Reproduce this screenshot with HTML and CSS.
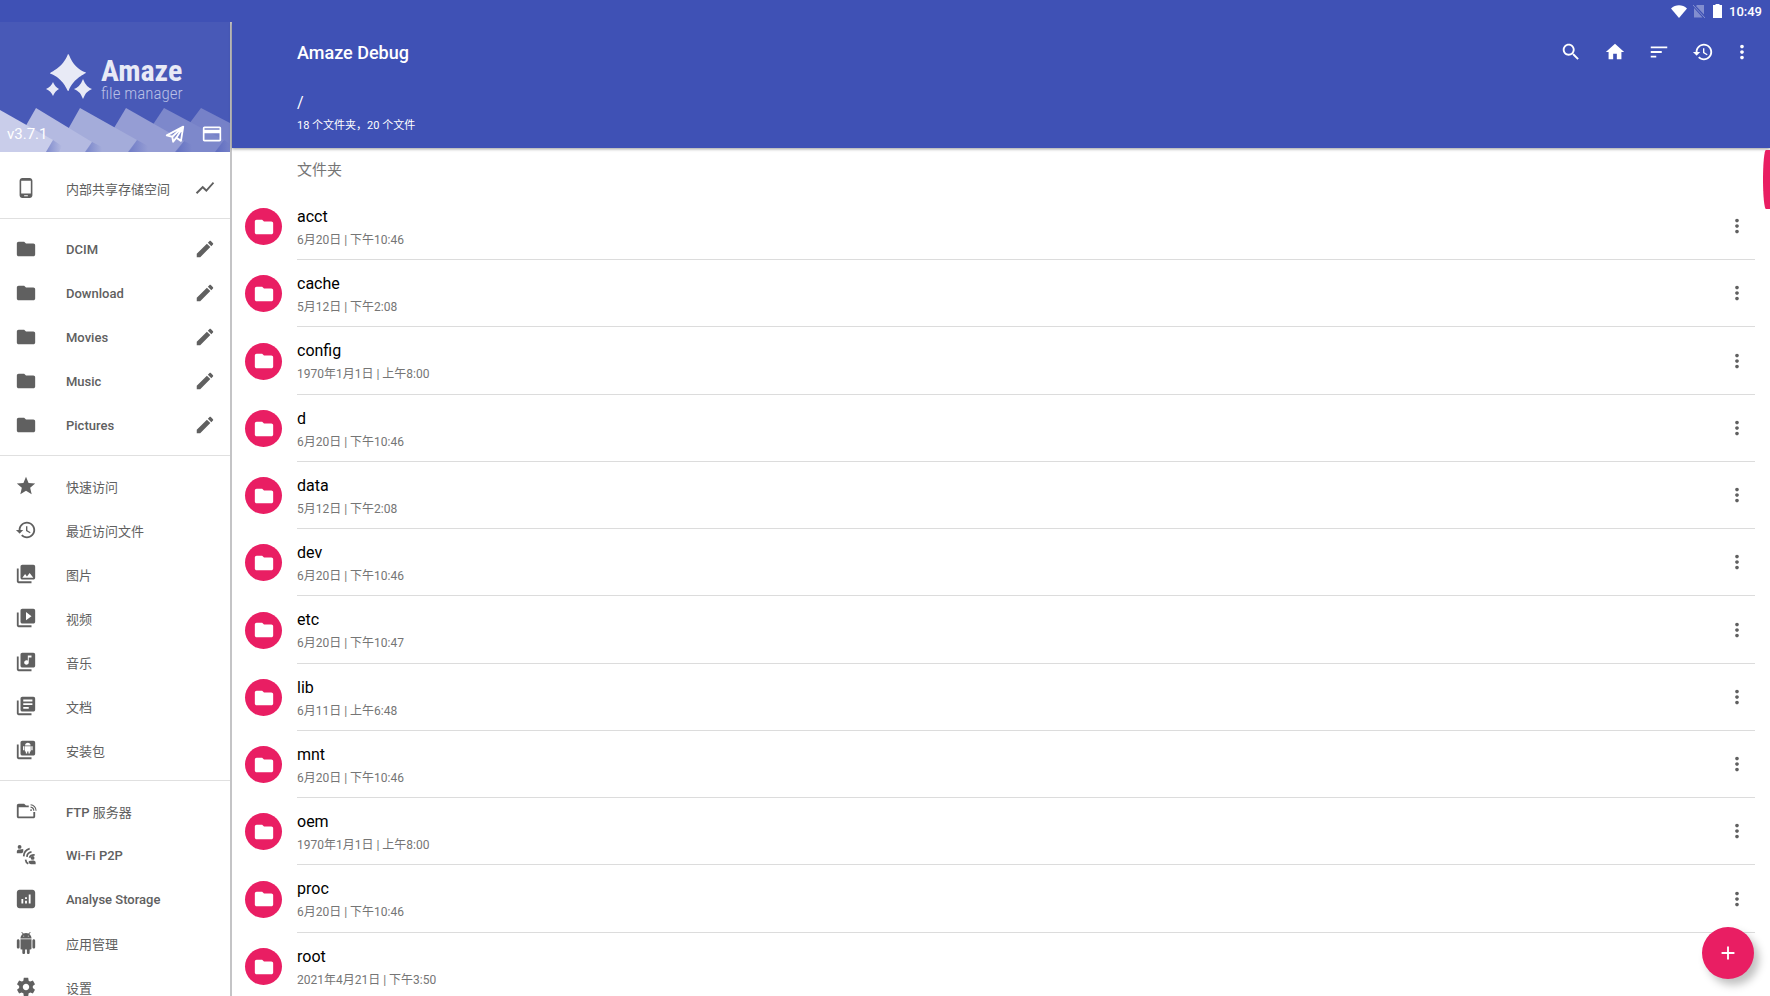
FILE: index.html
```html
<!DOCTYPE html>
<html lang="zh-CN">
<head>
  <meta charset="UTF-8">
  <meta name="viewport" content="width=device-width, initial-scale=1.0">
  <title>Amaze Debug</title>
  <link rel="stylesheet" href="styles.css">
</head>
<body>
  <!-- Icon shapes shared by the drawer, toolbar and file list -->
  <svg class="sprite" aria-hidden="true">
    <symbol id="folder" viewBox="0 0 24 24"><path d="M10 4H4c-1.100 0-2 .9-2 2v12c0 1.100.9 2 2 2h16c1.100 0 2-.9 2-2V8c0-1.100-.9-2-2-2h-8l-2-2z"/></symbol>
    <symbol id="pencil" viewBox="0 0 24 24"><path d="M3 17.250V21h3.750L17.810 9.940l-3.750-3.750L3 17.250zM20.710 7.040c.39-.39.39-1.020 0-1.410l-2.340-2.340c-.39-.39-1.020-.39-1.410 0l-1.830 1.830 3.750 3.750 1.830-1.830z"/></symbol>
    <symbol id="phone" viewBox="0 0 24 24"><path d="M16 1H8C6.340 1 5 2.340 5 4v16c0 1.660 1.340 3 3 3h8c1.660 0 3-1.340 3-3V4c0-1.660-1.340-3-3-3zm-2 20h-4v-1h4v1zm3.250-3H6.750V4h10.500v14z"/></symbol>
    <symbol id="chart-line" viewBox="0 0 24 24"><path d="M3.500 18.490l6-6.010 4 4L22 6.920l-1.410-1.410-7.090 7.970-4-4L2 16.990z"/></symbol>
    <symbol id="star" viewBox="0 0 24 24"><path d="M12 17.270L18.180 21l-1.640-7.030L22 9.240l-7.190-.61L12 2 9.190 8.630 2 9.240l5.460 4.730L5.820 21z"/></symbol>
    <symbol id="history" viewBox="0 0 24 24"><path d="M13 3c-4.970 0-9 4.030-9 9H1l3.890 3.890.07.14L9 12H6c0-3.870 3.130-7 7-7s7 3.130 7 7-3.130 7-7 7c-1.930 0-3.680-.79-4.940-2.060l-1.420 1.420C8.270 19.990 10.510 21 13 21c4.970 0 9-4.030 9-9s-4.030-9-9-9zm-1 5v5l4.280 2.540.72-1.210-3.500-2.080V8H12z"/></symbol>
    <symbol id="images" viewBox="0 0 24 24"><path d="M22 16V4c0-1.100-.9-2-2-2H8c-1.100 0-2 .9-2 2v12c0 1.100.9 2 2 2h12c1.100 0 2-.9 2-2zm-11-4l2.030 2.710L16 11l4 5H8l3-4zM2 6v14c0 1.100.9 2 2 2h14v-2H4V6H2z"/></symbol>
    <symbol id="videos" viewBox="0 0 24 24"><path d="M4 6H2v14c0 1.100.9 2 2 2h14v-2H4V6zm16-4H8c-1.100 0-2 .9-2 2v12c0 1.100.9 2 2 2h12c1.100 0 2-.9 2-2V4c0-1.100-.9-2-2-2zm-8 12.500v-9l6 4.500-6 4.500z"/></symbol>
    <symbol id="music" viewBox="0 0 24 24"><path d="M20 2H8c-1.100 0-2 .9-2 2v12c0 1.100.9 2 2 2h12c1.100 0 2-.9 2-2V4c0-1.100-.9-2-2-2zm-2 5h-3v5.500c0 1.380-1.120 2.500-2.500 2.500S10 13.880 10 12.500s1.120-2.500 2.500-2.500c.57 0 1.080.19 1.500.51V5h4v2zM4 6H2v14c0 1.100.9 2 2 2h14v-2H4V6z"/></symbol>
    <symbol id="docs" viewBox="0 0 24 24"><path d="M4 6H2v14c0 1.100.9 2 2 2h14v-2H4V6zm16-4H8c-1.100 0-2 .9-2 2v12c0 1.100.9 2 2 2h12c1.100 0 2-.9 2-2V4c0-1.100-.9-2-2-2zm-1 9H9V9h10v2zm-4 4H9v-2h6v2zm4-8H9V5h10v2z"/></symbol>
    <symbol id="apks" viewBox="0 0 24 24"><path fill-rule="evenodd" d="M4 6H2v14c0 1.100.9 2 2 2h14v-2H4V6zM20 2H8c-1.100 0-2 .9-2 2v12c0 1.100.9 2 2 2h12c1.100 0 2-.9 2-2V4c0-1.100-.9-2-2-2zM11 7.200c0-1.800 1.300-3 3-3s3 1.200 3 3zM8.800 7.800h1.400v4.600H8.800zM17.800 7.800h1.400v4.600h-1.400zM10.800 7.800h6.400v5.700h-1v2.300h-1.500v-2.300h-1.400v2.300h-1.500v-2.300h-1z"/></symbol>
    <symbol id="ftp" viewBox="0 0 24 24"><path d="M4 4h6l2 2h3v2H4v10h16v-5h2v5c0 1.100-.9 2-2 2H4c-1.100 0-2-.9-2-2V6c0-1.100.9-2 2-2z"/><path fill="none" stroke="currentColor" stroke-width="1.200" d="M17 5.200a6.500 6.500 0 0 1 6 6.500M17 7.800a4 4 0 0 1 3.500 4"/><circle cx="17.500" cy="11" r="1"/></symbol>
    <symbol id="p2p" viewBox="0 0 24 24"><circle cx="5" cy="3.200" r="2.100"/><path d="M2 10V8c0-1.400 1.400-2 3.200-2L9 5.500V8c0 1.300-.7 2-2 2z"/><circle cx="19.200" cy="15.200" r="2.100"/><path d="M15 18.500l4.200-.5c1.800 0 3.300.6 3.300 2v2H17.500c-1.500 0-2.500-1-2.500-2z"/><path fill="none" stroke="currentColor" stroke-width="1.900" d="M9.500 13.500c.2-4.500 2.500-7.500 6.500-8.500M13 14c.2-3 2-5 5-5.500M11.500 17c.2 2 1.200 3.500 3 4.500M21.500 12c-2.800-.2-4.800.8-5.700 3"/></symbol>
    <symbol id="analyse" viewBox="0 0 24 24"><path d="M19 2H5c-1.650 0-3 1.350-3 3v14c0 1.650 1.350 3 3 3h14c1.650 0 3-1.350 3-3V5c0-1.650-1.350-3-3-3zM9 17H7v-5h2v5zm4 0h-2v-3h2v3zm0-5h-2v-2h2v2zm4 5h-2V7h2v10z"/></symbol>
    <symbol id="android" viewBox="0 0 24 24"><path d="M6 18c0 .55.45 1 1 1h1v3.500c0 .83.67 1.500 1.500 1.500s1.500-.67 1.500-1.500V19h2v3.500c0 .83.67 1.500 1.500 1.500s1.500-.67 1.500-1.500V19h1c.55 0 1-.45 1-1V8H6v10zM3.500 8C2.670 8 2 8.670 2 9.500v7c0 .83.67 1.500 1.500 1.500S5 17.330 5 16.500v-7C5 8.670 4.330 8 3.500 8zm17 0c-.83 0-1.500.67-1.500 1.500v7c0 .83.67 1.500 1.500 1.500s1.500-.67 1.500-1.500v-7c0-.83-.67-1.500-1.500-1.500zm-4.970-5.840l1.300-1.300c.2-.2.2-.51 0-.71-.2-.2-.51-.2-.71 0l-1.480 1.480C13.850 1.230 12.950 1 12 1c-.96 0-1.860.23-2.660.63L7.850.15c-.2-.2-.51-.2-.71 0-.2.2-.2.51 0 .71l1.310 1.310C6.970 3.260 6 5.010 6 7h12c0-1.990-.97-3.750-2.470-4.840zM10 5H9V4h1v1zm5 0h-1V4h1v1z"/></symbol>
    <symbol id="gear" viewBox="0 0 24 24"><path d="M19.430 12.980c.04-.32.07-.64.07-.98s-.03-.66-.07-.98l2.110-1.650c.19-.15.24-.42.12-.64l-2-3.460c-.12-.22-.39-.3-.61-.22l-2.490 1c-.52-.4-1.080-.73-1.690-.98l-.38-2.650C14.460 2.180 14.250 2 14 2h-4c-.25 0-.46.18-.49.42l-.38 2.650c-.61.25-1.170.59-1.690.98l-2.490-1c-.23-.09-.49 0-.61.22l-2 3.460c-.13.22-.07.49.12.64l2.110 1.650c-.04.32-.07.65-.07.98s.03.66.07.98l-2.110 1.650c-.19.15-.24.42-.12.64l2 3.460c.12.22.39.3.61.22l2.490-1c.52.4 1.080.73 1.690.98l.38 2.650c.03.24.24.42.49.42h4c.25 0 .46-.18.49-.42l.38-2.650c.61-.25 1.170-.59 1.690-.98l2.490 1c.23.09.49 0 .61-.22l2-3.460c.12-.22.07-.49-.12-.64l-2.110-1.650zM12 15.500c-1.930 0-3.500-1.570-3.500-3.500s1.570-3.500 3.500-3.500 3.500 1.570 3.500 3.500-1.570 3.500-3.500 3.500z"/></symbol>
    <symbol id="dots" viewBox="0 0 24 24"><path d="M12 8c1.100 0 2-.9 2-2s-.9-2-2-2-2 .9-2 2 .9 2 2 2zm0 2c-1.100 0-2 .9-2 2s.9 2 2 2 2-.9 2-2-.9-2-2-2zm0 6c-1.100 0-2 .9-2 2s.9 2 2 2 2-.9 2-2-.9-2-2-2z"/></symbol>
    <symbol id="search" viewBox="0 0 24 24"><path d="M15.500 14h-.79l-.28-.27C15.410 12.590 16 11.110 16 9.500 16 5.910 13.090 3 9.500 3S3 5.910 3 9.500 5.910 16 9.500 16c1.610 0 3.090-.59 4.230-1.570l.27.28v.79l5 4.990L20.490 19l-4.990-5zm-6 0C7.010 14 5 11.990 5 9.500S7.010 5 9.500 5 14 7.010 14 9.500 11.990 14 9.500 14z"/></symbol>
    <symbol id="home" viewBox="0 0 24 24"><path d="M10 20v-6h4v6h5v-8h3L12 3 2 12h3v8z"/></symbol>
    <symbol id="sort" viewBox="0 0 24 24"><path d="M3 18h6v-2H3v2zM3 6v2h18V6H3zm0 7h12v-2H3v2z"/></symbol>
    <symbol id="plus" viewBox="0 0 24 24"><path d="M19 13h-6v6h-2v-6H5v-2h6V5h2v6h6v2z"/></symbol>
    <symbol id="telegram" viewBox="0 0 24 24"><path fill="none" stroke="currentColor" stroke-width="2" stroke-linejoin="round" d="M3 13.500L21 4l-2.500 15.500-5-3.500-3.500 4.500-1-5.500zM9 15L21 4l-7.500 12"/></symbol>
    <symbol id="card" viewBox="0 0 24 24"><path d="M21 3H3c-1.110 0-2 .89-2 2v14c0 1.110.89 2 2 2h18c1.110 0 2-.89 2-2V5c0-1.110-.89-2-2-2zm0 16H3v-8h18v8zm0-12H3V5h18v2z"/></symbol>
  </svg>

  <div class="status-bar">
    <svg class="wifi" viewBox="0 0 16 13"><path d="M0 3.500C4.500-.8 11.500-.8 16 3.500L8 13z"/></svg>
    <svg class="no-sim" viewBox="0 0 12 14"><path d="M4 1h7v9.500L3 2zM1 4l8.500 9.500H1z"/><path d="M0 1l12 13" fill="none" stroke="currentColor"/></svg>
    <svg class="battery" viewBox="0 0 9 14"><path d="M2.500 0h4v1H9v13H0V1h2.500z"/></svg>
    <span class="clock">10:49</span>
  </div>

  <div class="app">
    <aside class="drawer">
      <header class="drawer-header">
        <svg class="banner" viewBox="0 0 230 130" preserveAspectRatio="none" aria-hidden="true">
          <defs>
            <linearGradient id="fold"><stop offset="0" stop-color="#3f51b5" stop-opacity=".45"/><stop offset="1" stop-color="#3f51b5" stop-opacity="0"/></linearGradient>
          </defs>
          <path fill="#7681c8" d="M184 130l-1-20 18-24 29 15v29z"/>
          <path fill="#7d88cb" d="M148 130v-20l16-24 60 32-8 12z"/>
          <path fill="url(#fold)" d="M215 130l9-12 6 4v8z"/>
          <path fill="#959dd4" d="M108 130v-14l18-30 58 33-8 11z"/>
          <path fill="url(#fold)" d="M175 130l9-11 8 4v7z"/>
          <path fill="#a4acda" d="M62 130v-12l18-32 57 32-8 12z"/>
          <path fill="url(#fold)" d="M128 130l9-12 11 6v6z"/>
          <path fill="#b4bae1" d="M20 130v-16l16-28 56 34-6 10z"/>
          <path fill="url(#fold)" d="M85 130l7-10 10 5v5z"/>
          <path fill="#c9cdea" d="M0 88l53 30-7 12H0z"/>
          <path fill="url(#fold)" d="M46 130l7-12 9 6-3 6z"/>
        </svg>
        <div class="logo">
          <svg class="stars" viewBox="0 0 46 46" aria-hidden="true">
            <path d="M22 0C24 0 25 13 40 18.500C40 20 28 23 22.500 37C21 38 19 25 4 19.500C4 18 17 14 22 0zM7 28Q9 33 13 35Q9 37 7 42Q5 37 0 35Q5 33 7 28zM37 25Q40 33 46 35Q40 37 37 45Q34 37 28 35Q34 33 37 25z"/>
          </svg>
          <div class="logo-text">
            <strong>Amaze</strong>
            <span>file manager</span>
          </div>
        </div>
        <div class="drawer-footer">
          <span class="version">v3.7.1</span>
          <button type="button" aria-label="Telegram"><svg class="icon"><use href="#telegram"/></svg></button>
          <button type="button" aria-label="Donate"><svg class="icon small"><use href="#card"/></svg></button>
        </div>
      </header>

      <nav>
        <ul class="storage">
          <li><a href="#" class="zh"><svg class="icon"><use href="#phone"/></svg>内部共享存储空间</a><button type="button" aria-label="Usage"><svg class="icon"><use href="#chart-line"/></svg></button></li>
        </ul>
        <ul>
          <li><a href="#"><svg class="icon"><use href="#folder"/></svg>DCIM</a><button type="button" aria-label="Edit DCIM"><svg class="icon"><use href="#pencil"/></svg></button></li>
          <li><a href="#"><svg class="icon"><use href="#folder"/></svg>Download</a><button type="button" aria-label="Edit Download"><svg class="icon"><use href="#pencil"/></svg></button></li>
          <li><a href="#"><svg class="icon"><use href="#folder"/></svg>Movies</a><button type="button" aria-label="Edit Movies"><svg class="icon"><use href="#pencil"/></svg></button></li>
          <li><a href="#"><svg class="icon"><use href="#folder"/></svg>Music</a><button type="button" aria-label="Edit Music"><svg class="icon"><use href="#pencil"/></svg></button></li>
          <li><a href="#"><svg class="icon"><use href="#folder"/></svg>Pictures</a><button type="button" aria-label="Edit Pictures"><svg class="icon"><use href="#pencil"/></svg></button></li>
        </ul>
        <ul class="zh">
          <li><a href="#"><svg class="icon"><use href="#star"/></svg>快速访问</a></li>
          <li><a href="#"><svg class="icon"><use href="#history"/></svg>最近访问文件</a></li>
          <li><a href="#"><svg class="icon"><use href="#images"/></svg>图片</a></li>
          <li><a href="#"><svg class="icon"><use href="#videos"/></svg>视频</a></li>
          <li><a href="#"><svg class="icon"><use href="#music"/></svg>音乐</a></li>
          <li><a href="#"><svg class="icon"><use href="#docs"/></svg>文档</a></li>
          <li><a href="#"><svg class="icon"><use href="#apks"/></svg>安装包</a></li>
        </ul>
        <ul>
          <li><a href="#"><svg class="icon"><use href="#ftp"/></svg><span>FTP <span class="zh">服务器</span></span></a></li>
          <li><a href="#"><svg class="icon"><use href="#p2p"/></svg>Wi-Fi P2P</a></li>
          <li><a href="#"><svg class="icon"><use href="#analyse"/></svg>Analyse Storage</a></li>
          <li><a href="#" class="zh"><svg class="icon"><use href="#android"/></svg>应用管理</a></li>
          <li><a href="#" class="zh"><svg class="icon"><use href="#gear"/></svg>设置</a></li>
        </ul>
      </nav>
    </aside>

    <main>
      <header class="toolbar">
        <div class="toolbar-top">
          <h1>Amaze Debug</h1>
          <button type="button" aria-label="Search"><svg class="icon"><use href="#search"/></svg></button>
          <button type="button" aria-label="Home"><svg class="icon"><use href="#home"/></svg></button>
          <button type="button" aria-label="Sort"><svg class="icon"><use href="#sort"/></svg></button>
          <button type="button" aria-label="History"><svg class="icon"><use href="#history"/></svg></button>
          <button type="button" class="more" aria-label="More"><svg class="icon"><use href="#dots"/></svg></button>
        </div>
        <div class="path">/</div>
        <div class="summary">18 个文件夹，20 个文件</div>
      </header>

      <section class="files">
        <h2>文件夹</h2>
        <ul id="fileList"></ul>
        <div class="scroll-thumb"></div>
      </section>
    </main>
  </div>

  <button type="button" class="fab" aria-label="Add"><svg class="icon"><use href="#plus"/></svg></button>

  <script>
    var folders = [
      ["acct", "6月20日 | 下午10:46"],
      ["cache", "5月12日 | 下午2:08"],
      ["config", "1970年1月1日 | 上午8:00"],
      ["d", "6月20日 | 下午10:46"],
      ["data", "5月12日 | 下午2:08"],
      ["dev", "6月20日 | 下午10:46"],
      ["etc", "6月20日 | 下午10:47"],
      ["lib", "6月11日 | 上午6:48"],
      ["mnt", "6月20日 | 下午10:46"],
      ["oem", "1970年1月1日 | 上午8:00"],
      ["proc", "6月20日 | 下午10:46"],
      ["root", "2021年4月21日 | 下午3:50"]
    ];

    // Build one row per folder
    document.getElementById("fileList").innerHTML = folders.map(function(folder) {
      return '<li>' +
        '<span class="badge"><svg class="icon"><use href="#folder"/></svg></span>' +
        '<div class="file">' +
          '<a href="#"><span class="name">' + folder[0] + '</span><span class="date">' + folder[1] + '</span></a>' +
          '<button type="button" aria-label="Options for ' + folder[0] + '"><svg class="icon"><use href="#dots"/></svg></button>' +
        '</div>' +
      '</li>';
    }).join("");
  </script>
</body>
</html>
```

FILE: styles.css
```css
* {
  box-sizing: border-box;
}

body {
  margin: 0;
  height: 100vh;
  display: flex;
  flex-direction: column;
  overflow: hidden;
  background-color: #fff;
  font-family: Roboto, "Noto Sans CJK SC", sans-serif;
  color: #000;
}

ul {
  list-style: none;
  margin: 0;
  padding: 0;
}

a {
  color: inherit;
  text-decoration: none;
}

button {
  display: flex;
  align-items: center;
  justify-content: center;
  padding: 0;
  border: none;
  background: none;
  color: inherit;
  cursor: pointer;
}

svg {
  fill: currentColor;
  flex-shrink: 0;
}

.sprite {
  position: absolute;
  width: 0;
  height: 0;
}

.icon {
  width: 22px;
  height: 22px;
}

.icon.small {
  width: 20px;
  height: 20px;
}

/* Status bar */
.status-bar {
  position: relative;
  z-index: 1;
  display: flex;
  align-items: center;
  justify-content: flex-end;
  height: 22px;
  flex-shrink: 0;
  padding-right: 8px;
  background-color: #3f51b5;
  color: #fff;
}

.wifi {
  width: 16px;
  height: 13px;
}

.no-sim {
  width: 12px;
  height: 14px;
  margin-left: 6px;
  opacity: 0.35;
}

.battery {
  width: 9px;
  height: 14px;
  margin-left: 8px;
}

.clock {
  margin-left: 7px;
  font-size: 13px;
  font-weight: 500;
}

.app {
  display: flex;
  flex: 1;
  min-height: 0;
}

/* Drawer */
.drawer {
  width: 232px;
  flex-shrink: 0;
  overflow: hidden;
  border-right: 2px solid #c4c4c6;
  color: #606060;
}

.drawer-header {
  position: relative;
  display: flex;
  flex-direction: column;
  justify-content: space-between;
  height: 130px;
  background-color: #4859b7;
  color: #fff;
}

.banner {
  position: absolute;
  inset: 0;
  width: 100%;
  height: 100%;
}

.logo {
  position: relative;
  display: flex;
  gap: 9px;
  padding: 32px 0 0 46px;
  color: #e8eaf6;
}

.stars {
  width: 46px;
  height: 46px;
}

.logo-text {
  display: flex;
  flex-direction: column;
  padding-top: 4px;
  font-family: "Roboto Condensed", Roboto, sans-serif;
  font-stretch: condensed;
}

.logo-text strong {
  font-size: 30px;
  line-height: 26px;
}

.logo-text span {
  font-size: 17px;
  font-weight: 300;
  line-height: 18px;
  color: #b9c0e6;
}

.drawer-footer {
  position: relative;
  display: flex;
  align-items: center;
  gap: 16px;
  height: 36px;
  padding: 0 8px 0 7px;
}

.version {
  flex: 1;
  font-size: 15px;
}

.drawer ul {
  padding: 8px 0;
  border-bottom: 1px solid #e0e0e0;
}

.drawer .storage {
  padding-top: 14px;
}

.drawer li {
  display: flex;
  align-items: center;
  height: 44px;
  padding: 0 14px 0 15px;
}

.drawer li a {
  display: flex;
  align-items: center;
  gap: 29px;
  flex: 1;
  font-size: 13px;
  font-weight: 500;
  white-space: nowrap;
}

.drawer .zh,
.drawer .zh a {
  font-weight: 400;
}

/* Toolbar */
main {
  display: flex;
  flex-direction: column;
  flex: 1;
  min-width: 0;
}

.toolbar {
  position: relative;
  height: 126px;
  flex-shrink: 0;
  padding-left: 65px;
  background-color: #3f51b5;
  box-shadow: 0 1px 3px rgba(0, 0, 0, 0.4);
  color: #fff;
}

.toolbar-top {
  display: flex;
  align-items: center;
  height: 60px;
  padding-right: 17px;
}

.toolbar-top button {
  width: 44px;
  height: 44px;
}

.toolbar-top .more {
  width: 22px;
  margin-left: 6px;
}

h1 {
  flex: 1;
  margin: 0;
  font-size: 18px;
  font-weight: 500;
}

.path {
  margin-top: 11px;
  font-size: 16px;
  line-height: 20px;
}

.summary {
  margin-top: 4px;
  font-size: 11px;
  line-height: 18px;
}

/* File list */
.files {
  position: relative;
  flex: 1;
  min-height: 0;
  overflow: hidden;
}

h2 {
  height: 45px;
  margin: 0;
  padding-left: 65px;
  font-size: 15px;
  font-weight: 400;
  line-height: 44px;
  color: #757575;
}

.files li {
  display: flex;
  align-items: center;
  height: 67px;
  padding: 0 15px 0 13px;
}

/* an extra pixel every few rows keeps the list on the 67.25px row rhythm */
.files li:nth-child(4n + 3) {
  height: 68px;
}

.badge {
  display: flex;
  align-items: center;
  justify-content: center;
  width: 37px;
  height: 37px;
  margin-right: 15px;
  border-radius: 50%;
  background-color: #e91e63;
  color: #fff;
}

.file {
  display: flex;
  align-items: center;
  flex: 1;
  height: 100%;
  border-bottom: 1px solid #dcdcdc;
}

.file a {
  display: flex;
  flex-direction: column;
  flex: 1;
  padding-top: 3px;
}

.name {
  font-size: 16px;
  line-height: 24px;
}

.date {
  font-size: 12px;
  line-height: 22px;
  color: #757575;
}

.file button {
  width: 36px;
  height: 44px;
  color: #606060;
}

.scroll-thumb {
  position: absolute;
  top: 2px;
  right: 0;
  width: 7px;
  height: 59px;
  border-radius: 3px 0 0 3px / 30px 0 0 30px;
  background-color: #e91e63;
}

.fab {
  position: fixed;
  right: 16px;
  bottom: 17px;
  width: 52px;
  height: 52px;
  border-radius: 50%;
  background-color: #e91e63;
  box-shadow: 5px 6px 8px rgba(0, 0, 0, 0.25);
  color: #fff;
}
```
